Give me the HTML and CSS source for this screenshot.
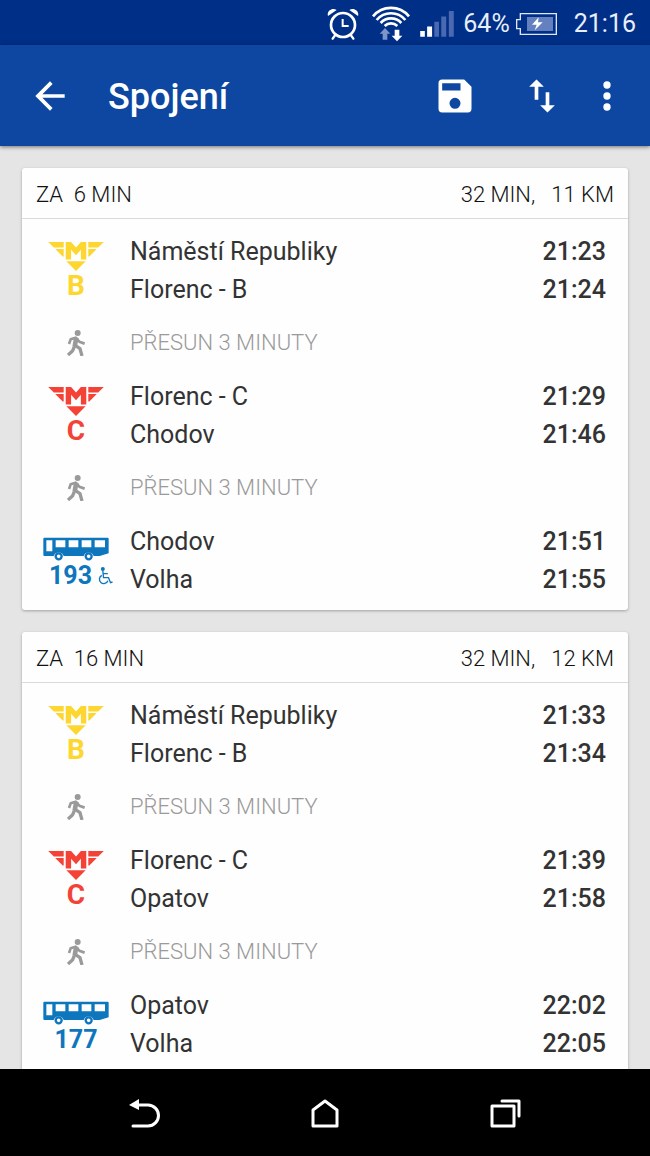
FILE: index.html
```html
<!DOCTYPE html>
<html lang="cs">
<head>
  <meta charset="UTF-8">
  <meta name="viewport" content="width=device-width, initial-scale=1.0">
  <title>Spojení</title>
  <link rel="stylesheet" href="styles.css">
</head>
<body>
  <!-- shared icons -->
  <svg class="sprite" aria-hidden="true">
    <symbol id="metro" viewBox="0 0 165 86">
      <path d="M0 0H46V16H17ZM21 21H46V43H43ZM165 0H119V16H148ZM144 21H119V43H122Z"/>
      <path d="M52 52V0H68L82.500 16L97 0H113V52H97V23L82.500 39L68 23V52Z"/>
      <path d="M54 57H111L82.500 86Z"/>
    </symbol>
    <symbol id="bus" viewBox="0 0 198 72">
      <path fill-rule="evenodd" d="M4 2H194Q197 2 197 5V49L170 57H152A16 16 0 0 0 122 57H62A16 16 0 0 0 32 57H4Q1 57 1 54V5Q1 2 4 2ZM10 10V43H28V10ZM38 10V31H67V10ZM77 10V31H106V10ZM116 10V31H145V10ZM155 10V31H186V10Z"/>
      <circle cx="47" cy="58" r="9" fill="none" stroke="currentColor" stroke-width="7"/>
      <circle cx="137" cy="58" r="9" fill="none" stroke="currentColor" stroke-width="7"/>
    </symbol>
    <symbol id="walk" viewBox="0 0 54 78">
      <circle cx="32" cy="9" r="9"/>
      <g fill="none" stroke="currentColor" stroke-linejoin="round">
        <path stroke-width="8" d="M6 42L11 28L26 23L37 35L53 41"/>
        <path stroke-width="14" d="M28 23L23 50"/>
        <path stroke-width="10" d="M23 45L39 56L45 78M22 50L17 62L3 75"/>
      </g>
    </symbol>
    <symbol id="wheelchair" viewBox="0 0 44 54">
      <circle cx="14" cy="6" r="6"/>
      <path fill="none" stroke="currentColor" stroke-width="4" d="M14 11L16 32H31L37 47L43 45M15 20H29M11 25A13 13 0 1 0 29 41"/>
    </symbol>
  </svg>

  <div class="status-bar">
    <svg class="status-alarm" viewBox="0 0 96 96">
      <g fill="none" stroke="#fff">
        <circle cx="48" cy="51" r="36" stroke-width="8"/>
        <path stroke-width="6" d="M47 33V54H65"/>
        <path stroke-width="7" stroke-linecap="round" d="M24 82L17 92M72 82L79 92"/>
      </g>
      <path fill="#fff" d="M3 24C-2 9 16-3 29 6ZM93 24C98 9 80-3 67 6Z"/>
    </svg>
    <svg class="status-wifi" viewBox="0 0 114 111">
      <path fill="none" stroke="#fff" stroke-width="8" d="M3 34A70 70 0 0 1 111 34M14 45A56 56 0 0 1 100 45M26 54A42 42 0 0 1 88 54M38 63A27 27 0 0 1 76 63"/>
      <path fill="#7d95c8" d="M39 69L55 86H46V104H32V86H23Z"/>
      <path fill="#fff" d="M68 74H82V92H91L75 109L59 92H68Z"/>
    </svg>
    <svg class="status-signal" viewBox="0 0 102 79">
      <path fill="#fff" d="M0 61H14V78H0ZM21 47H36V78H21Z"/>
      <path fill="#4a69b0" d="M43 33H57V78H43ZM64 17H79V78H64ZM87 0H102V78H87Z"/>
    </svg>
    <span>64%</span>
    <svg class="status-battery" viewBox="0 0 123 66">
      <path fill="none" stroke="#dfe6f5" stroke-width="4" d="M13 2H121V64H13V47H2V20H13Z"/>
      <path fill="#6480bf" d="M33 12H111V54H33Z"/>
      <path fill="#fff" d="M68 13L48 35H62L56 52L80 28H66Z"/>
    </svg>
    <span class="status-time">21:16</span>
  </div>

  <header class="app-bar">
    <button class="icon-btn" aria-label="Zpět">
      <svg viewBox="0 0 24 24"><path d="M20 11H7.830L13.420 5.410L12 4L4 12L12 20L13.410 18.590L7.830 13H20Z"/></svg>
    </button>
    <h1>Spojení</h1>
    <button class="icon-btn save-btn" aria-label="Uložit">
      <svg viewBox="0 0 24 24"><path d="M17 3H5a2 2 0 0 0-2 2v14a2 2 0 0 0 2 2h14a2 2 0 0 0 2-2V7l-4-4zm-5 16a3 3 0 1 1 0-6 3 3 0 0 1 0 6zm3-10H5V5h10v4z"/></svg>
    </button>
    <button class="icon-btn" aria-label="Obrátit směr">
      <svg viewBox="0 0 24 24"><path d="M16 17V10h-2v7h-3l4 4 4-4h-3zM9 3L5 7h3v7h2V7h3L9 3z"/></svg>
    </button>
    <button class="icon-btn" aria-label="Další možnosti">
      <svg viewBox="0 0 24 24"><circle cx="12" cy="6" r="2"/><circle cx="12" cy="12" r="2"/><circle cx="12" cy="18" r="2"/></svg>
    </button>
  </header>

  <main class="results">
    <section class="card">
      <div class="card-header">
        <span>ZA&nbsp; 6 MIN</span>
        <span>32 MIN, &nbsp; 11 KM</span>
      </div>
      <div class="card-body">
        <div class="leg">
          <div class="line metro line-b">
            <svg><use href="#metro"/></svg>
            <span>B</span>
          </div>
          <div class="stops">
            <div class="stop"><span>Náměstí Republiky</span><time>21:23</time></div>
            <div class="stop"><span>Florenc - B</span><time>21:24</time></div>
          </div>
        </div>
        <div class="transfer">
          <svg><use href="#walk"/></svg>
          <span>PŘESUN 3 MINUTY</span>
        </div>
        <div class="leg">
          <div class="line metro line-c">
            <svg><use href="#metro"/></svg>
            <span>C</span>
          </div>
          <div class="stops">
            <div class="stop"><span>Florenc - C</span><time>21:29</time></div>
            <div class="stop"><span>Chodov</span><time>21:46</time></div>
          </div>
        </div>
        <div class="transfer">
          <svg><use href="#walk"/></svg>
          <span>PŘESUN 3 MINUTY</span>
        </div>
        <div class="leg">
          <div class="line bus">
            <svg><use href="#bus"/></svg>
            <span class="accessible">193 <svg class="wheelchair"><use href="#wheelchair"/></svg></span>
          </div>
          <div class="stops">
            <div class="stop"><span>Chodov</span><time>21:51</time></div>
            <div class="stop"><span>Volha</span><time>21:55</time></div>
          </div>
        </div>
      </div>
    </section>

    <section class="card">
      <div class="card-header">
        <span>ZA&nbsp; 16 MIN</span>
        <span>32 MIN, &nbsp; 12 KM</span>
      </div>
      <div class="card-body">
        <div class="leg">
          <div class="line metro line-b">
            <svg><use href="#metro"/></svg>
            <span>B</span>
          </div>
          <div class="stops">
            <div class="stop"><span>Náměstí Republiky</span><time>21:33</time></div>
            <div class="stop"><span>Florenc - B</span><time>21:34</time></div>
          </div>
        </div>
        <div class="transfer">
          <svg><use href="#walk"/></svg>
          <span>PŘESUN 3 MINUTY</span>
        </div>
        <div class="leg">
          <div class="line metro line-c">
            <svg><use href="#metro"/></svg>
            <span>C</span>
          </div>
          <div class="stops">
            <div class="stop"><span>Florenc - C</span><time>21:39</time></div>
            <div class="stop"><span>Opatov</span><time>21:58</time></div>
          </div>
        </div>
        <div class="transfer">
          <svg><use href="#walk"/></svg>
          <span>PŘESUN 3 MINUTY</span>
        </div>
        <div class="leg">
          <div class="line bus">
            <svg><use href="#bus"/></svg>
            <span>177</span>
          </div>
          <div class="stops">
            <div class="stop"><span>Opatov</span><time>22:02</time></div>
            <div class="stop"><span>Volha</span><time>22:05</time></div>
          </div>
        </div>
      </div>
    </section>
  </main>

  <nav class="nav-bar">
    <button aria-label="Zpět">
      <svg viewBox="0 0 32 32"><path fill="#fff" stroke="none" d="M0 8L10 2V13Z"/><path d="M8 8H19A10 10 0 0 1 19 29H4"/></svg>
    </button>
    <button aria-label="Domů">
      <svg viewBox="0 0 32 32"><path d="M4 13L16 4L28 13V29H4Z"/></svg>
    </button>
    <button aria-label="Poslední aplikace">
      <svg viewBox="0 0 32 32"><path d="M3 9H25V29H3ZM13 4H30V19"/></svg>
    </button>
  </nav>
</body>
</html>
```

FILE: styles.css
```css
* {
  box-sizing: border-box;
}
body {
  margin: 0;
  height: 100vh;
  display: flex;
  flex-direction: column;
  background-color: #e5e5e5;
  color: #333;
  font-family: Roboto, "Noto Sans", sans-serif;
  font-size: 25px;
}
svg {
  display: block;
  fill: currentColor;
}
button {
  display: flex;
  align-items: center;
  justify-content: center;
  padding: 0;
  border: none;
  background: none;
  color: inherit;
  cursor: pointer;
}
.sprite {
  display: none;
}

/* system status bar */
.status-bar {
  flex: none;
  display: flex;
  align-items: center;
  justify-content: flex-end;
  gap: 8px;
  height: 45px;
  padding: 2px 14px 0 0;
  background-color: #002f87;
  color: #e8eefa;
}
.status-alarm {
  width: 32px;
  height: 32px;
  margin-right: 5px;
}
.status-wifi {
  width: 38px;
  height: 37px;
  margin-right: 2px;
}
.status-signal {
  width: 34px;
  height: 26px;
  margin-right: 1px;
}
.status-battery {
  width: 41px;
  height: 22px;
  margin-left: -2px;
}
.status-time {
  margin-left: 9px;
}

/* app bar */
.app-bar {
  flex: none;
  display: flex;
  align-items: center;
  gap: 21px;
  height: 101px;
  padding: 0 21px 0 28px;
  background-color: #0d47a1;
  color: #fff;
  box-shadow: 0 1px 4px rgba(0, 0, 0, 0.5);
  z-index: 1;
}
.app-bar h1 {
  flex: 1;
  margin: 2px 0 0 15px;
  font-size: 36px;
  font-weight: 500;
}
.icon-btn {
  width: 44px;
  height: 44px;
}
.icon-btn svg {
  width: 44px;
  height: 44px;
}
.save-btn {
  margin-right: 22px;
}

/* list of connections */
.results {
  flex: 1;
  min-height: 0;
  overflow: hidden;
  padding: 22px;
}
.card {
  margin-bottom: 22px;
  background-color: #fefefe;
  border-radius: 3px;
  box-shadow: 0 1px 3px rgba(0, 0, 0, 0.3);
}
.card-header {
  display: flex;
  justify-content: space-between;
  padding: 12px 14px 8px;
  border-bottom: 1px solid #dadada;
  color: #111;
  font-size: 22px;
  font-weight: 300;
  line-height: 30px;
}
.card-body {
  padding: 14px 22px 11px 0;
}
.leg,
.transfer {
  display: grid;
  grid-template-columns: 108px 1fr;
}
.stop {
  display: flex;
  justify-content: space-between;
  line-height: 38px;
}
.stop time {
  font-weight: 500;
}
.transfer {
  align-items: center;
  height: 69px;
  padding-bottom: 2px;
  color: #9a9a9a;
  font-size: 22px;
  font-weight: 300;
}
.transfer svg {
  justify-self: center;
  width: 18px;
  height: 26px;
}

/* line badges */
.line {
  display: flex;
  flex-direction: column;
  align-items: center;
  font-weight: 700;
  line-height: 28px;
}
.line span {
  padding-top: 1px;
}
.metro {
  padding-top: 9px;
  font-size: 28px;
}
.metro svg {
  width: 56px;
  height: 29px;
}
.line-b {
  color: #fdd62f;
}
.line-c {
  color: #f44336;
}
.bus {
  padding-top: 14px;
  color: #0e76bd;
}
.bus svg {
  width: 66px;
  height: 24px;
}
.accessible {
  display: flex;
  align-items: center;
  gap: 6px;
  padding-left: 10px;
}
.accessible .wheelchair {
  width: 15px;
  height: 18px;
}

/* system navigation */
.nav-bar {
  flex: none;
  display: flex;
  height: 87px;
  padding: 0 55px;
  background-color: #000;
}
.nav-bar button {
  flex: 1;
}
.nav-bar svg {
  width: 32px;
  height: 32px;
  fill: none;
  stroke: #fff;
  stroke-width: 3;
  stroke-linecap: round;
  stroke-linejoin: round;
}
```
